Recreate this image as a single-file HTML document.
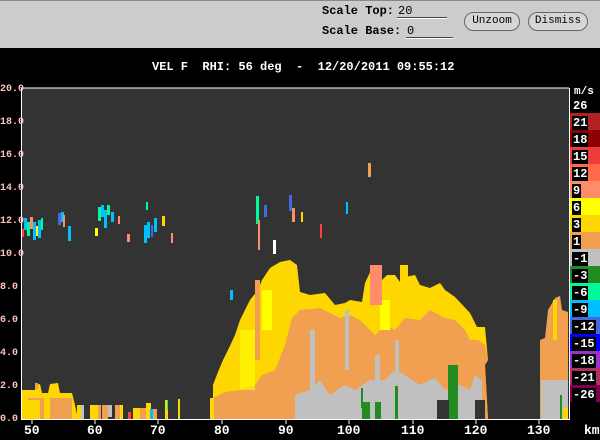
<!DOCTYPE html>
<html><head><style>
*{margin:0;padding:0}
body{width:600px;height:440px;background:#000;position:relative;overflow:hidden;font-family:"Liberation Mono",monospace}
.hdr{position:absolute;left:0;top:0;width:600px;height:47px;background:#cccccc;border-top:1px solid #888}
.t{position:absolute;font-weight:bold;white-space:pre}
.btn{position:absolute;border:1px solid #666;border-radius:10px;background:#d6d6d6;font-size:11px;text-align:center;line-height:17px;color:#000;font-family:"Liberation Mono",monospace}
.ul{position:absolute;height:1px;background:#444;border-bottom:1px solid #fff}
.yl{position:absolute;left:0;color:#ffc0c0;font-size:10px;font-weight:bold}
.xl{position:absolute;top:423px;color:#fff;font-size:13px;font-weight:bold}
.cb{position:absolute;left:570px;width:30px;height:17px}
.cl{position:absolute;left:572px;background:#000;color:#fff;font-size:12px;font-weight:bold;line-height:14px;padding:0 1px}
</style></head><body>
<div class="hdr">
<div class="t" style="left:322px;top:3px;font-size:12px;color:#000">Scale Top:</div>
<div class="t" style="left:398px;top:3px;font-size:12px;color:#000;font-weight:normal">20</div>
<div class="ul" style="left:397px;top:16px;width:50px"></div>
<div class="t" style="left:322px;top:23px;font-size:12px;color:#000">Scale Base:</div>
<div class="t" style="left:407px;top:23px;font-size:12px;color:#000;font-weight:normal">0</div>
<div class="ul" style="left:406px;top:36px;width:47px"></div>
<div class="btn" style="left:464px;top:11px;width:54px">Unzoom</div>
<div class="btn" style="left:528px;top:11px;width:58px">Dismiss</div>
</div>
<div class="t" style="left:152px;top:60px;font-size:12px;color:#fff">VEL F  RHI: 56 deg  -  12/20/2011 09:55:12</div>

<svg style="position:absolute;left:0;top:0" width="600" height="440">
<rect x="21" y="88" width="548" height="331" fill="#333"/>
<line x1="21" y1="88" x2="569" y2="88" stroke="#fff"/>
<line x1="21.5" y1="88" x2="21.5" y2="420" stroke="#fff"/>
<line x1="569.5" y1="88" x2="569.5" y2="420" stroke="#fff"/>
<line x1="21" y1="419.5" x2="570" y2="419.5" stroke="#fff"/>
<g stroke="#fff">
<line x1="32" y1="420" x2="32" y2="424"/><line x1="95" y1="420" x2="95" y2="424"/><line x1="158" y1="420" x2="158" y2="424"/><line x1="222" y1="420" x2="222" y2="424"/><line x1="286" y1="420" x2="286" y2="424"/><line x1="349" y1="420" x2="349" y2="424"/><line x1="413" y1="420" x2="413" y2="424"/><line x1="476" y1="420" x2="476" y2="424"/><line x1="539" y1="420" x2="539" y2="424"/>
</g>
<!-- main blob -->
<polygon fill="#ffd700" points="213,419 213,385 218,372 223,360 228,350 235,335 240,320 250,300 258,290 262,280 270,268 280,262 290,260 297,265 300,292 310,295 325,293 335,305 345,303 350,300 362,302 365,283 372,268 380,267 382,280 387,275 395,275 400,282 405,277 415,275 420,285 430,288 440,283 445,290 455,297 470,313 477,327 485,327 488,360 485,365 488,419"/>
<polygon fill="#f0a050" points="213,419 213,398 225,392 240,390 255,385 262,375 275,370 285,345 292,318 300,310 320,308 340,318 350,315 360,320 375,335 385,325 395,330 405,318 420,320 430,310 445,318 455,320 465,330 470,340 478,340 485,345 488,360 485,365 488,419"/>
<polygon fill="#f0a050" points="215,419 215,402 230,395 238,405 260,408 270,400 280,419"/>
<rect x="255" y="280" width="5" height="80" fill="#f0a050"/>
<rect x="240" y="330" width="15" height="60" fill="#ffff00" opacity="0.6"/>
<rect x="262" y="290" width="10" height="40" fill="#ffff00"/>
<rect x="380" y="300" width="10" height="30" fill="#ffff00"/>
<rect x="370" y="265" width="12" height="40" fill="#ff8c69"/>
<rect x="400" y="265" width="8" height="30" fill="#ffd700"/>
<polygon fill="#c0c0c0" points="295,419 295,395 310,390 320,380 330,395 345,385 355,390 370,380 385,380 395,370 405,375 420,385 435,378 445,390 460,385 470,390 475,375 482,380 482,419"/>
<rect x="310" y="330" width="5" height="60" fill="#c0c0c0"/>
<rect x="345" y="310" width="4" height="60" fill="#c0c0c0"/>
<rect x="375" y="355" width="5" height="30" fill="#c0c0c0"/>
<rect x="395" y="340" width="4" height="50" fill="#c0c0c0"/>
<rect x="452" y="365" width="6" height="20" fill="#c0c0c0"/>
<g fill="#228b22">
<rect x="362" y="402" width="8" height="17"/><rect x="375" y="402" width="6" height="17"/><rect x="395" y="386" width="3" height="33"/><rect x="448" y="365" width="10" height="54"/><rect x="361" y="388" width="2" height="20"/>
</g>
<rect x="475" y="400" width="10" height="19" fill="#333"/>
<rect x="437" y="400" width="12" height="19" fill="#333"/>
<!-- left bottom cluster -->
<polygon fill="#ffd700" points="22,419 22,390 35,390 35,385 40,384 42,393 48,393 50,384 58,383 60,393 72,393 75,405 78,419"/>
<rect x="28" y="398" width="44" height="21" fill="#f0a050"/>
<rect x="22" y="400" width="18" height="19" fill="#ffd700"/>
<rect x="44" y="396" width="6" height="23" fill="#ffd700"/>
<rect x="35" y="383" width="3" height="6" fill="#f0a050"/>
<g>
<rect x="90" y="405" width="8" height="14" fill="#ffd700"/><rect x="98" y="405" width="3" height="14" fill="#f0a050"/>
<rect x="102" y="405" width="6" height="14" fill="#f0a050"/><rect x="108" y="405" width="4" height="12" fill="#c0c0c0"/>
<rect x="115" y="405" width="5" height="14" fill="#f0a050"/><rect x="120" y="405" width="3" height="14" fill="#ffd700"/>
<rect x="128" y="412" width="3" height="7" fill="#ff4040"/><rect x="133" y="408" width="7" height="11" fill="#ffd700"/>
<rect x="140" y="408" width="6" height="11" fill="#f0a050"/><rect x="146" y="403" width="5" height="16" fill="#ffd700"/>
<rect x="150" y="409" width="3" height="10" fill="#00bfff"/><rect x="153" y="409" width="4" height="10" fill="#f0a050"/>
<rect x="165" y="400" width="3" height="19" fill="#ffd700"/><rect x="167" y="400" width="1" height="10" fill="#00fa9a"/>
<rect x="178" y="399" width="2" height="20" fill="#ffd700"/>
<rect x="77" y="405" width="4" height="14" fill="#ffd700"/><rect x="81" y="405" width="3" height="14" fill="#c0c0c0"/>
<rect x="210" y="398" width="4" height="21" fill="#ffd700"/>
</g>
<!-- right cluster -->
<polygon fill="#f0a050" points="540,419 540,340 545,338 548,310 555,298 560,296 562,310 568,312 568,419"/>
<rect x="553" y="300" width="4" height="40" fill="#ffd700"/>
<rect x="541" y="380" width="27" height="39" fill="#c0c0c0"/>
<rect x="560" y="395" width="2" height="24" fill="#228b22"/>
<rect x="563" y="408" width="5" height="11" fill="#ffd700"/>
<!-- scattered echoes -->
<g>
<rect x="24" y="218" width="3" height="12" fill="#00bfff"/><rect x="27" y="222" width="3" height="14" fill="#00fa9a"/><rect x="30" y="217" width="3" height="12" fill="#ff8c69"/><rect x="33" y="222" width="3" height="18" fill="#00bfff"/><rect x="36" y="226" width="2" height="10" fill="#ffff00"/><rect x="38" y="220" width="3" height="18" fill="#00bfff"/><rect x="41" y="218" width="2" height="12" fill="#00fa9a"/><rect x="22" y="229" width="2" height="8" fill="#ff4040"/>
<rect x="58" y="213" width="3" height="12" fill="#4169e1"/><rect x="61" y="212" width="3" height="10" fill="#00bfff"/><rect x="63" y="215" width="2" height="12" fill="#ff8c69"/><rect x="68" y="226" width="3" height="15" fill="#00bfff"/>
<rect x="98" y="207" width="3" height="14" fill="#00fa9a"/><rect x="101" y="205" width="3" height="12" fill="#00bfff"/><rect x="104" y="210" width="3" height="18" fill="#00bfff"/><rect x="107" y="205" width="3" height="10" fill="#00fa9a"/><rect x="95" y="230" width="2" height="6" fill="#00fa9a"/><rect x="111" y="212" width="3" height="10" fill="#00bfff"/><rect x="118" y="216" width="2" height="8" fill="#ff8c69"/><rect x="127" y="234" width="3" height="8" fill="#ff8c69"/>
<rect x="146" y="202" width="2" height="8" fill="#00fa9a"/><rect x="144" y="225" width="3" height="18" fill="#00bfff"/><rect x="147" y="222" width="3" height="16" fill="#00bfff"/><rect x="151" y="225" width="2" height="12" fill="#4169e1"/><rect x="154" y="218" width="3" height="14" fill="#00bfff"/><rect x="162" y="216" width="3" height="10" fill="#ffd700"/><rect x="171" y="233" width="2" height="10" fill="#ff8c69"/><rect x="95" y="228" width="3" height="8" fill="#ffff00"/>
<rect x="256" y="196" width="3" height="28" fill="#00fa9a"/><rect x="258" y="220" width="2" height="30" fill="#ff8c69"/><rect x="264" y="205" width="3" height="12" fill="#4169e1"/><rect x="273" y="240" width="3" height="14" fill="#ffffff"/>
<rect x="289" y="195" width="3" height="16" fill="#4169e1"/><rect x="292" y="208" width="3" height="14" fill="#ff8c69"/><rect x="301" y="212" width="2" height="10" fill="#ffd700"/><rect x="320" y="224" width="2" height="14" fill="#ff4040"/><rect x="346" y="202" width="2" height="12" fill="#00bfff"/><rect x="368" y="163" width="3" height="14" fill="#f0a050"/><rect x="230" y="290" width="3" height="10" fill="#00bfff"/>
</g>
</svg>

<div class="yl" style="top:84px">20.0</div>
<div class="yl" style="top:117px">18.0</div>
<div class="yl" style="top:150px">16.0</div>
<div class="yl" style="top:183px">14.0</div>
<div class="yl" style="top:216px">12.0</div>
<div class="yl" style="top:249px">10.0</div>
<div class="yl" style="top:282px">8.0</div>
<div class="yl" style="top:315px">6.0</div>
<div class="yl" style="top:348px">4.0</div>
<div class="yl" style="top:381px">2.0</div>
<div class="yl" style="top:414px">0.0</div>

<div class="xl" style="left:24px">50</div>
<div class="xl" style="left:87px">60</div>
<div class="xl" style="left:150px">70</div>
<div class="xl" style="left:214px">80</div>
<div class="xl" style="left:278px">90</div>
<div class="xl" style="left:337px">100</div>
<div class="xl" style="left:401px">110</div>
<div class="xl" style="left:464px">120</div>
<div class="xl" style="left:527px">130</div>
<div class="xl" style="left:584px">km</div>

<div class="t" style="left:574px;top:86px;font-size:11px;color:#fff">m/s</div>
<div class="cl" style="top:99px">26</div>
<div class="cb" style="top:113px;background:#b22222"></div>
<div class="cb" style="top:130px;background:#8b0000"></div>
<div class="cb" style="top:147px;background:#ee3b3b"></div>
<div class="cb" style="top:164px;background:#ff6a4a"></div>
<div class="cb" style="top:181px;background:#ff8c69"></div>
<div class="cb" style="top:198px;background:#ffff00"></div>
<div class="cb" style="top:215px;background:#ffd700"></div>
<div class="cb" style="top:232px;background:#f0a050"></div>
<div class="cb" style="top:249px;background:#c0c0c0"></div>
<div class="cb" style="top:266px;background:#228b22"></div>
<div class="cb" style="top:283px;background:#00fa9a"></div>
<div class="cb" style="top:300px;background:#00bfff"></div>
<div class="cb" style="top:317px;background:#4169e1"></div>
<div class="cb" style="top:334px;background:#0000ff"></div>
<div class="cb" style="top:351px;background:#9932cc"></div>
<div class="cb" style="top:368px;background:#b03060"></div>
<div class="cb" style="top:385px;background:#800050"></div>
<div class="cl" style="top:116px">21</div>
<div class="cl" style="top:133px">18</div>
<div class="cl" style="top:150px">15</div>
<div class="cl" style="top:167px">12</div>
<div class="cl" style="top:184px">9</div>
<div class="cl" style="top:201px">6</div>
<div class="cl" style="top:218px">3</div>
<div class="cl" style="top:235px">1</div>
<div class="cl" style="top:252px">-1</div>
<div class="cl" style="top:269px">-3</div>
<div class="cl" style="top:286px">-6</div>
<div class="cl" style="top:303px">-9</div>
<div class="cl" style="top:320px">-12</div>
<div class="cl" style="top:337px">-15</div>
<div class="cl" style="top:354px">-18</div>
<div class="cl" style="top:371px">-21</div>
<div class="cl" style="top:388px">-26</div>
</body></html>
